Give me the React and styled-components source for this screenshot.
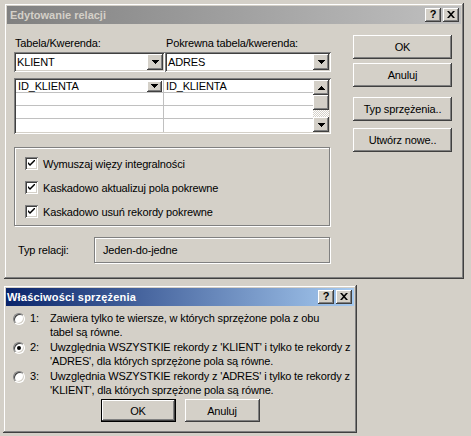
import React from 'react';
import styled, { createGlobalStyle, css } from 'styled-components';

const FACE = '#d4d0c8';

const GlobalStyle = createGlobalStyle`
  html, body { margin: 0; padding: 0; background: ${FACE}; }
  body {
    width: 471px; height: 436px; overflow: hidden;
    font-family: "Liberation Sans", Arial, sans-serif;
    font-size: 11px; color: #000;
    letter-spacing: -0.15px;
  }
  * { box-sizing: border-box; }
`;

const raisedEdge = css`
  box-shadow: inset -1px -1px #404040, inset 1px 1px #ffffff,
    inset -2px -2px #808080, inset 2px 2px ${FACE};
`;

const sunkenEdge = css`
  box-shadow: inset 1px 1px #808080, inset -1px -1px #ffffff,
    inset 2px 2px #404040, inset -2px -2px ${FACE};
`;

const Desktop = styled.div`
  display: flex;
  flex-direction: column;
  align-items: flex-start;
`;

const Window = styled.div`
  width: ${p => p.$w}px;
  height: ${p => p.$h}px;
  margin: ${p => p.$m};
  padding: 3px;
  background: ${FACE};
  box-shadow: inset -1px -1px #404040, inset 1px 1px ${FACE},
    inset -2px -2px #808080, inset 2px 2px #ffffff;
  display: flex;
  flex-direction: column;
`;

const TitleBar = styled.div`
  height: 18px;
  flex: none;
  display: flex;
  align-items: center;
  justify-content: space-between;
  padding: 0 2px 0 ${p => (p.$active ? 1 : 3)}px;
  background: ${p => p.$active
    ? 'linear-gradient(to right, #0a246a, #a6caf0)'
    : 'linear-gradient(to right, #808080, #c0c0c0)'};
`;

const TitleText = styled.span`
  font-weight: bold;
  font-size: 11px;
  letter-spacing: ${p => (p.$active ? '0.2px' : '0')};
  color: ${p => (p.$active ? '#ffffff' : FACE)};
  white-space: nowrap;
`;

const CaptionButtons = styled.div`
  display: flex;
  gap: 2px;
`;

const CaptionButton = styled.div`
  width: 16px;
  height: 14px;
  background: ${FACE};
  ${raisedEdge};
  display: flex;
  align-items: center;
  justify-content: center;
  font-weight: bold;
  font-size: 11px;
  letter-spacing: 0;
  line-height: 1;
  padding-bottom: 1px;
`;

const TopBody = styled.div`
  display: flex;
  padding: 12px 0 0 7px;
  gap: 22px;
`;

const LeftPanel = styled.div`
  width: 317px;
  display: flex;
  flex-direction: column;
`;

const TwoCols = styled.div`
  display: grid;
  grid-template-columns: 151px 166px;
  margin-top: ${p => p.$mt || 0}px;
`;

const FieldLabel = styled.div`
  height: 13px;
  line-height: 13px;
  padding-left: 1px;
  white-space: nowrap;
`;

const Combo = styled.div`
  height: 20px;
  background: #fff;
  ${sunkenEdge};
  display: flex;
  align-items: center;
  padding: 2px 2px 2px 3px;
  justify-content: space-between;
`;

const ComboText = styled.span`
  line-height: 14px;
`;

const DropButton = styled.div`
  width: ${p => p.$w || 16}px;
  height: ${p => p.$h || 16}px;
  background: ${FACE};
  ${raisedEdge};
  display: flex;
  align-items: center;
  justify-content: center;
  flex: none;
`;

const Arrow = ({ up }) => (
  <svg width="7" height="4" viewBox="0 0 7 4" style={{ display: 'block' }}>
    <path d={up ? 'M3.5 0 L7 4 L0 4 Z' : 'M0 0 L7 0 L3.5 4 Z'} fill="#000" shapeRendering="crispEdges" />
  </svg>
);

const Grid = styled.div`
  margin-top: 6px;
  height: 56px;
  padding: 2px;
  background: #fff;
  ${sunkenEdge};
  display: flex;
`;

const GridRows = styled.div`
  flex: 1;
  display: flex;
  flex-direction: column;
`;

const GridRow = styled.div`
  height: 13px;
  display: grid;
  grid-template-columns: 148px 1fr;
  border-bottom: ${p => (p.$last ? 'none' : '1px solid #c0c0c0')};
`;

const GridCell = styled.div`
  display: flex;
  align-items: center;
  justify-content: space-between;
  padding-left: 2px;
  padding-right: 1px;
  border-right: ${p => (p.$divider ? '1px solid #c0c0c0' : 'none')};
  line-height: 12px;
  white-space: nowrap;
`;

const ScrollBar = styled.div`
  width: 16px;
  display: flex;
  flex-direction: column;
`;

const ScrollThumb = styled.div`
  height: 15px;
  background: ${FACE};
  ${raisedEdge};
`;

const ScrollTrack = styled.div`
  flex: 1;
  background: repeating-conic-gradient(#ffffff 0 25%, ${FACE} 0 50%) 0 0 / 2px 2px;
`;

const GroupBox = styled.div`
  margin-top: 13px;
  width: 316px;
  height: 79px;
  border: 1px solid #808080;
  box-shadow: inset 1px 1px #ffffff, 1px 1px #ffffff;
  padding: 9px 0 0 10px;
  display: flex;
  flex-direction: column;
  gap: 11px;
`;

const CheckRow = styled.label`
  display: flex;
  align-items: center;
  height: 13px;
  gap: 5px;
  white-space: nowrap;
`;

const CheckBoxBox = styled.span`
  width: 13px;
  height: 13px;
  flex: none;
  background: #fff;
  ${sunkenEdge};
  display: flex;
  align-items: center;
  justify-content: center;
`;

const CheckBox = () => (
  <CheckBoxBox>
    <svg width="7" height="7" viewBox="0 0 7 7" style={{ display: 'block' }}>
      <path d="M0 2 L0 4 L2 6 L7 1 L7 -1 L2 4 Z" fill="#000" />
    </svg>
  </CheckBoxBox>
);

const TypeRow = styled.div`
  margin-top: 11px;
  display: flex;
  align-items: center;
`;

const TypeLabel = styled.div`
  width: 80px;
  padding-left: 4px;
`;

const TypeField = styled.div`
  width: 236px;
  height: 26px;
  border: 1px solid #808080;
  box-shadow: inset 1px 1px #ffffff, 1px 1px #ffffff;
  display: flex;
  align-items: center;
  padding-left: 8px;
`;

const ButtonColumn = styled.div`
  display: flex;
  flex-direction: column;
  margin-top: -1px;
`;

const Button = styled.div`
  width: ${p => p.$w || 99}px;
  height: ${p => p.$h || 24}px;
  margin-top: ${p => p.$mt || 0}px;
  background: ${FACE};
  ${raisedEdge};
  display: flex;
  align-items: center;
  justify-content: center;
  white-space: nowrap;
  ${p => p.$default && css`
    border: 1px solid #000;
  `}
`;

const LowerBody = styled.div`
  display: flex;
  flex-direction: column;
  padding: 5px 0 0 7px;
`;

const OptionList = styled.div`
  display: flex;
  flex-direction: column;
  gap: 1px;
`;

const OptionRow = styled.div`
  display: flex;
  align-items: flex-start;
  height: 28px;
`;

const Radio = styled.span`
  width: 12px;
  height: 12px;
  margin-top: 2px;
  flex: none;
  border-radius: 50%;
  background: #fff;
  border: 1px solid;
  border-color: #808080 #ffffff #ffffff #808080;
  box-shadow: inset 1px 1px #404040, inset -1px -1px ${FACE};
  display: flex;
  align-items: center;
  justify-content: center;
  &::after {
    content: '';
    width: 4px;
    height: 4px;
    border-radius: 50%;
    background: ${p => (p.$checked ? '#000' : 'transparent')};
  }
`;

const OptionNumber = styled.span`
  width: 20px;
  margin-left: 5px;
  line-height: 14px;
  flex: none;
`;

const OptionText = styled.span`
  line-height: 14px;
  white-space: pre;
`;

const DialogButtons = styled.div`
  display: flex;
  justify-content: center;
  gap: 9px;
  margin-top: 2px;
  padding-right: 7px;
`;

const CloseGlyph = () => (
  <svg width="8" height="7" viewBox="0 0 8 7" style={{ display: 'block' }}>
    <path d="M0 0 L2 0 L4 2.2 L6 0 L8 0 L5 3.5 L8 7 L6 7 L4 4.8 L2 7 L0 7 L3 3.5 Z" fill="#000" />
  </svg>
);

const Caption = ({ title, active }) => (
  <TitleBar $active={active}>
    <TitleText $active={active}>{title}</TitleText>
    <CaptionButtons>
      <CaptionButton>?</CaptionButton>
      <CaptionButton><CloseGlyph /></CaptionButton>
    </CaptionButtons>
  </TitleBar>
);

const options = [
  ['1:', 'Zawiera tylko te wiersze, w których sprzężone pola z obu\ntabel są równe.', false],
  ['2:', "Uwzględnia WSZYSTKIE rekordy z 'KLIENT' i tylko te rekordy z\n'ADRES', dla których sprzężone pola są równe.", true],
  ['3:', "Uwzględnia WSZYSTKIE rekordy z 'ADRES' i tylko te rekordy z\n'KLIENT', dla których sprzężone pola są równe.", false],
];

const checks = [
  'Wymuszaj więzy integralności',
  'Kaskadowo aktualizuj pola pokrewne',
  'Kaskadowo usuń rekordy pokrewne',
];

export default function App() {
  return (
    <>
      <GlobalStyle />
      <Desktop>
        <Window $w={460} $h={276} $m="3px 0 0 4px">
          <Caption title="Edytowanie relacji" />
          <TopBody>
            <LeftPanel>
              <TwoCols $mt={1}>
                <FieldLabel>Tabela/Kwerenda:</FieldLabel>
                <FieldLabel>Pokrewna tabela/kwerenda:</FieldLabel>
              </TwoCols>
              <TwoCols $mt={2}>
                <Combo>
                  <ComboText>KLIENT</ComboText>
                  <DropButton><Arrow /></DropButton>
                </Combo>
                <Combo>
                  <ComboText>ADRES</ComboText>
                  <DropButton><Arrow /></DropButton>
                </Combo>
              </TwoCols>
              <Grid>
                <GridRows>
                  <GridRow>
                    <GridCell $divider>
                      ID_KLIENTA
                      <DropButton $w={15} $h={11}><Arrow /></DropButton>
                    </GridCell>
                    <GridCell>ID_KLIENTA</GridCell>
                  </GridRow>
                  <GridRow><GridCell $divider /><GridCell /></GridRow>
                  <GridRow><GridCell $divider /><GridCell /></GridRow>
                  <GridRow $last><GridCell $divider /><GridCell /></GridRow>
                </GridRows>
                <ScrollBar>
                  <DropButton $h={15}><Arrow up /></DropButton>
                  <ScrollThumb />
                  <ScrollTrack />
                  <DropButton $h={15}><Arrow /></DropButton>
                </ScrollBar>
              </Grid>
              <GroupBox>
                {checks.map(c => (
                  <CheckRow key={c}>
                    <CheckBox />
                    {c}
                  </CheckRow>
                ))}
              </GroupBox>
              <TypeRow>
                <TypeLabel>Typ relacji:</TypeLabel>
                <TypeField>Jeden-do-jedne</TypeField>
              </TypeRow>
            </LeftPanel>
            <ButtonColumn>
              <Button>OK</Button>
              <Button $mt={4}>Anuluj</Button>
              <Button $mt={10}>Typ sprzężenia..</Button>
              <Button $mt={7}>Utwórz nowe..</Button>
            </ButtonColumn>
          </TopBody>
        </Window>
        <Window $w={354} $h={148} $m="6px 0 0 3px">
          <Caption title="Właściwości sprzężenia" active />
          <LowerBody>
            <OptionList>
              {options.map(([n, t, on]) => (
                <OptionRow key={n}>
                  <Radio $checked={on} />
                  <OptionNumber>{n}</OptionNumber>
                  <OptionText>{t}</OptionText>
                </OptionRow>
              ))}
            </OptionList>
            <DialogButtons>
              <Button $w={75} $h={23} $default>OK</Button>
              <Button $w={75} $h={23}>Anuluj</Button>
            </DialogButtons>
          </LowerBody>
        </Window>
      </Desktop>
    </>
  );
}
